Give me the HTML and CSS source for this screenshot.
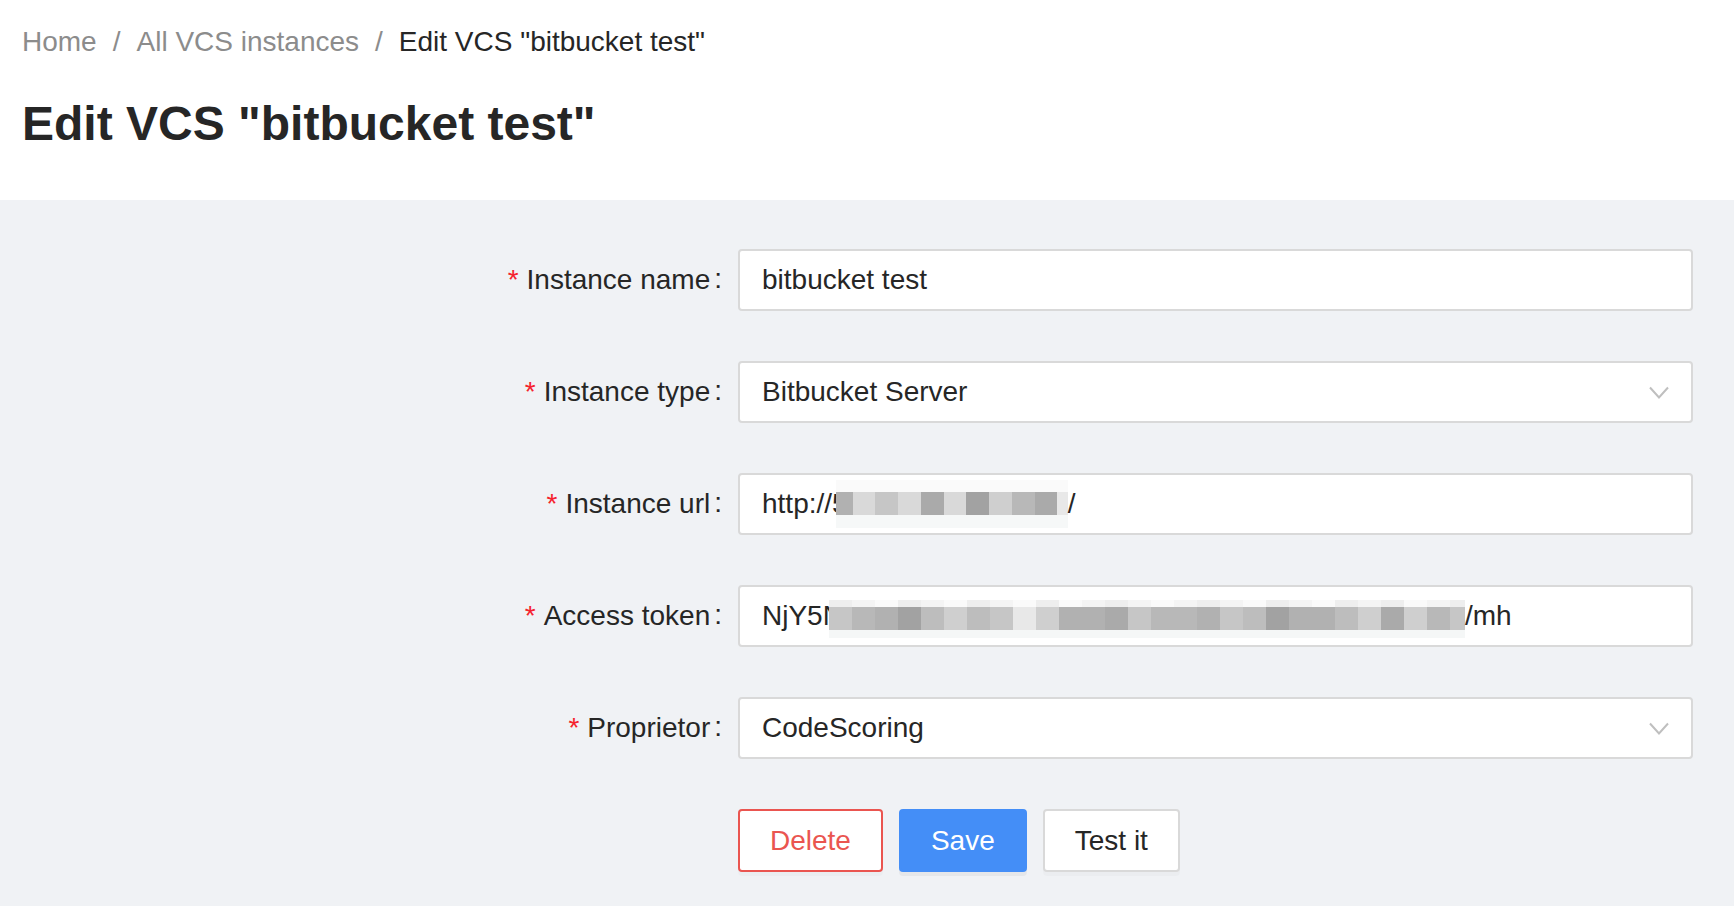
FILE: index.html
```html
<!DOCTYPE html>
<html lang="en">
<head>
<meta charset="utf-8">
<title>Edit VCS "bitbucket test"</title>
<link rel="stylesheet" href="styles.css">
</head>
<body>
<header class="page-header">
  <nav class="breadcrumb">
    <span class="crumb">Home</span>
    <span class="sep">/</span>
    <span class="crumb">All VCS instances</span>
    <span class="sep">/</span>
    <span class="crumb current">Edit VCS "bitbucket test"</span>
  </nav>
  <h1 class="title">Edit VCS "bitbucket test"</h1>
</header>
<main class="content">
  <form class="form">
    <label class="label"><span class="req">*</span>Instance name<span class="colon">:</span></label>
    <div class="field"><span class="val">bitbucket test</span></div>

    <label class="label"><span class="req">*</span>Instance type<span class="colon">:</span></label>
    <div class="field select"><span class="val">Bitbucket Server</span>
      <svg class="chev" width="20" height="13" viewBox="0 0 20 13"><polyline points="1,1.5 10,11.5 19,1.5" fill="none" stroke="#bfbfbf" stroke-width="2"/></svg>
    </div>

    <label class="label"><span class="req">*</span>Instance url<span class="colon">:</span></label>
    <div class="field"><span class="val">http://5</span>
      <span class="mosaic mz-url">
        <span class="mz-row top-url"></span>
        <span class="mz-row mid">
          <i class="c w17 g3"></i><i class="c w22 g8"></i><i class="c w23 g6"></i><i class="c w23 g8"></i><i class="c w23 g2"></i><i class="c w22 g8"></i><i class="c w23 g1"></i><i class="c w23 g7"></i><i class="c w23 g4"></i><i class="c w22 g2"></i><i class="c w11 g9"></i>
        </span>
        <span class="mz-row bot-url"></span>
      </span><span class="val">/</span>
    </div>

    <label class="label"><span class="req">*</span>Access token<span class="colon">:</span></label>
    <div class="field"><span class="val">NjY5N</span>
      <span class="mosaic mz-token">
        <span class="mz-row top-token">
          <i class="c w23 t1"></i><i class="c w23 t2"></i><i class="c w23 t3"></i><i class="c w23 t1"></i><i class="c w23 t2"></i><i class="c w23 t3"></i><i class="c w23 t1"></i><i class="c w23 t2"></i><i class="c w23 t3"></i><i class="c w23 t1"></i><i class="c w23 t3"></i><i class="c w23 t2"></i><i class="c w23 t1"></i><i class="c w23 t2"></i><i class="c w23 t3"></i><i class="c w23 t2"></i><i class="c w23 t1"></i><i class="c w23 t2"></i><i class="c w23 t3"></i><i class="c w23 t1"></i><i class="c w23 t2"></i><i class="c w23 t3"></i><i class="c w23 t1"></i><i class="c w23 t2"></i><i class="c w23 t1"></i><i class="c w23 t3"></i><i class="c w23 t2"></i><i class="c w15 t1"></i>
        </span>
        <span class="mz-row mid">
          <i class="c w23 g6"></i><i class="c w23 g4"></i><i class="c w23 g3"></i><i class="c w23 g1"></i><i class="c w23 g5"></i><i class="c w23 g7"></i><i class="c w23 g5"></i><i class="c w23 g6"></i><i class="c w23 g9"></i><i class="c w23 g7"></i><i class="c w23 g3"></i><i class="c w23 g3"></i><i class="c w23 g2"></i><i class="c w23 g6"></i><i class="c w23 g4"></i><i class="c w23 g4"></i><i class="c w23 g3"></i><i class="c w23 g6"></i><i class="c w23 g5"></i><i class="c w23 g1"></i><i class="c w23 g3"></i><i class="c w23 g3"></i><i class="c w23 g5"></i><i class="c w23 g7"></i><i class="c w23 g2"></i><i class="c w23 g7"></i><i class="c w23 g4"></i><i class="c w15 g6"></i>
        </span>
        <span class="mz-row bot-token"></span>
      </span><span class="val">/mh</span>
    </div>

    <label class="label"><span class="req">*</span>Proprietor<span class="colon">:</span></label>
    <div class="field select"><span class="val">CodeScoring</span>
      <svg class="chev" width="20" height="13" viewBox="0 0 20 13"><polyline points="1,1.5 10,11.5 19,1.5" fill="none" stroke="#bfbfbf" stroke-width="2"/></svg>
    </div>

    <div class="actions">
      <button type="button" class="btn btn-danger">Delete</button>
      <button type="button" class="btn btn-primary">Save</button>
      <button type="button" class="btn">Test it</button>
    </div>
  </form>
</main>
</body>
</html>
```

FILE: styles.css
```css
* { box-sizing: border-box; }
html, body {
  margin: 0;
  padding: 0;
  height: 100%;
}
body {
  background: #f0f2f5;
  font-family: "Liberation Sans", Arial, sans-serif;
  color: #262626;
  display: flex;
  flex-direction: column;
}
.page-header {
  background: #fff;
  padding: 20px 22px 44px;
}
.breadcrumb {
  display: flex;
  font-size: 28px;
  line-height: 44px;
  color: #8c8c8c;
  white-space: nowrap;
}
.sep { margin: 0 16px; }
.current { color: #262626; }
.title {
  margin: 28px 0 0;
  font-size: 48px;
  line-height: 64px;
  font-weight: 700;
  color: #262626;
}
.content {
  flex: 1;
  padding: 49px 41px 0 0;
}
.form {
  display: grid;
  grid-template-columns: 1fr 955px;
  grid-auto-rows: 62px;
  row-gap: 50px;
}
.label {
  display: flex;
  justify-content: flex-end;
  align-items: center;
  font-size: 28px;
  line-height: 40px;
  color: #262626;
  white-space: nowrap;
}
.req {
  color: #f5222d;
  margin-right: 8px;
}
.colon {
  margin: 0 16px 0 4px;
  position: relative;
  top: -1px;
}
.field {
  display: flex;
  align-items: center;
  height: 62px;
  border: 2px solid #d9d9d9;
  border-radius: 4px;
  background: #fff;
  padding: 0 20px 0 22px;
  font-size: 28px;
  line-height: 40px;
  color: #262626;
  white-space: nowrap;
}
.select { padding-right: 22px; }
.chev { margin-left: auto; flex: none; }
.mosaic {
  display: flex;
  flex-direction: column;
  flex: none;
}
.mz-url { margin-left: -12px; }
.mz-token { margin-left: -14px; margin-top: 6px; }
.mz-row { display: flex; }
.top-url { height: 12px; background: #fafafa; }
.bot-url { height: 13px; background: #f6f8f8; }
.top-token { height: 7px; }
.bot-token { height: 8px; background: #f5f7f7; }
.mid { height: 23px; }
.c { display: block; height: 100%; }
.w11 { width: 11px; }
.w15 { width: 15px; }
.w17 { width: 17px; }
.w22 { width: 22px; }
.w23 { width: 23px; }
.g1 { background: #a2a2a2; }
.g2 { background: #aaaaaa; }
.g3 { background: #b1b1b1; }
.g4 { background: #b8b8b8; }
.g5 { background: #bdbdbd; }
.g6 { background: #c6c6c6; }
.g7 { background: #cfcfcf; }
.g8 { background: #d9d9d9; }
.g9 { background: #e8e8e8; }
.t1 { background: #eeeeee; }
.t2 { background: #f4f4f4; }
.t3 { background: #fafafa; }
.actions {
  grid-column: 2;
  display: flex;
  gap: 16px;
  align-items: flex-start;
}
.btn {
  height: 63px;
  padding: 0 30px;
  border: 2px solid #d9d9d9;
  border-radius: 4px;
  background: #fff;
  color: #262626;
  font-family: "Liberation Sans", Arial, sans-serif;
  font-size: 28px;
  line-height: 40px;
  box-shadow: 0 4px 0 rgba(0, 0, 0, 0.02);
  cursor: pointer;
}
.btn-danger {
  border-color: #ea5550;
  color: #ea5550;
}
.btn-primary {
  background: #448ef7;
  border-color: #448ef7;
  color: #fff;
  box-shadow: 0 4px 0 rgba(0, 0, 0, 0.045);
}
```
